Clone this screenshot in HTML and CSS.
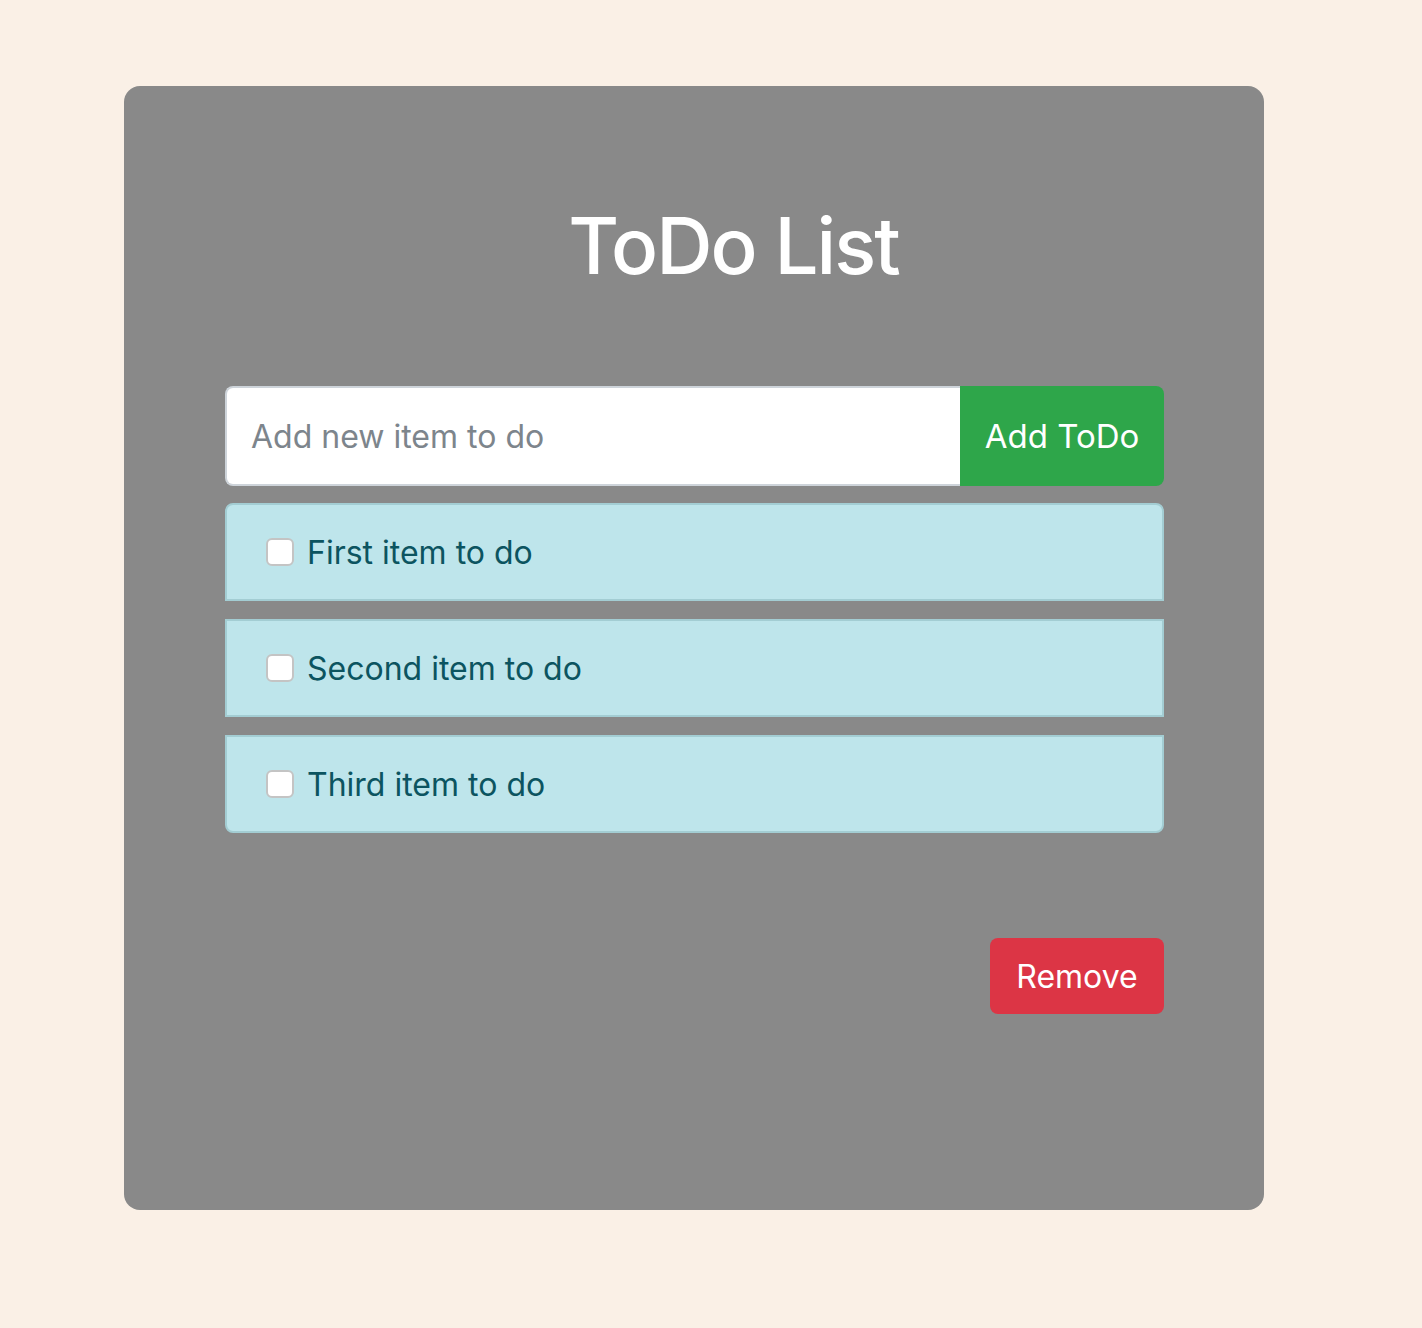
FILE: index.html
```html
<!DOCTYPE html>
<html>
<head>
<meta charset="utf-8">
<link rel="stylesheet" href="styles.css">
</head>
<body>
<main class="card">
  <h1 class="title">ToDo List</h1>
  <form class="add-row">
    <input class="add-input" type="text" placeholder="Add new item to do">
    <button class="add-btn" type="button">Add ToDo</button>
  </form>
  <ul class="items">
    <li class="item"><span class="check"></span><span class="label">First item to do</span></li>
    <li class="item"><span class="check"></span><span class="label">Second item to do</span></li>
    <li class="item"><span class="check"></span><span class="label">Third item to do</span></li>
  </ul>
  <div class="actions">
    <button class="remove-btn" type="button">Remove</button>
  </div>
</main>
</body>
</html>
```
FILE: styles.css
```css
* { box-sizing: border-box; }
body {
  margin: 0;
  background: #faf0e6;
  font-family: Inter, "Noto Sans", sans-serif;
  min-height: 1328px;
}
.card {
  margin: 86px 0 0 124px;
  width: 1140px;
  height: 1124px;
  background: #898989;
  border-radius: 16px;
  padding: 0 100px 0 101px;
  display: flex;
  flex-direction: column;
}
.title {
  margin: 0;
  padding: 112px 0 0 78px;
  text-align: center;
  color: #fff;
  font-size: 78px;
  font-weight: 500;
  line-height: 96px;
  letter-spacing: -2px;
  height: 300px;
}
.add-row {
  display: flex;
  height: 100px;
  margin: 0;
}
.add-input {
  flex: 1;
  border: 2px solid #ced4da;
  border-right: none;
  border-radius: 8px 0 0 8px;
  background: #fff;
  font-family: inherit;
  font-size: 32px;
  padding: 0 24px;
  color: #495057;
  outline: none;
}
.add-input::placeholder { color: #7d858c; }
.add-btn {
  width: 204px;
  border: none;
  border-radius: 0 8px 8px 0;
  background: #2ea64a;
  color: #fff;
  font-family: inherit;
  font-size: 33px;
  padding: 0;
}
.items {
  list-style: none;
  margin: 17px 0 0;
  padding: 0;
  display: flex;
  flex-direction: column;
  gap: 18px;
}
.item {
  height: 98px;
  background: #bee5eb;
  border: 2px solid #a3cdd3;
  display: flex;
  align-items: center;
  padding-left: 39px;
  color: #0c5460;
  font-size: 32px;
}
.item:first-child { border-radius: 8px 8px 0 0; }
.item:last-child { border-radius: 0 0 8px 8px; }
.check {
  width: 28px;
  height: 28px;
  background: #fff;
  border: 2px solid #c4c4c4;
  border-radius: 6px;
  margin-right: 13px;
  flex: none;
}
.actions {
  display: flex;
  justify-content: flex-end;
  margin-top: 105px;
}
.remove-btn {
  width: 174px;
  height: 76px;
  border: none;
  border-radius: 8px;
  background: #dc3545;
  color: #fff;
  font-family: inherit;
  font-size: 32px;
  padding: 0;
}
```
